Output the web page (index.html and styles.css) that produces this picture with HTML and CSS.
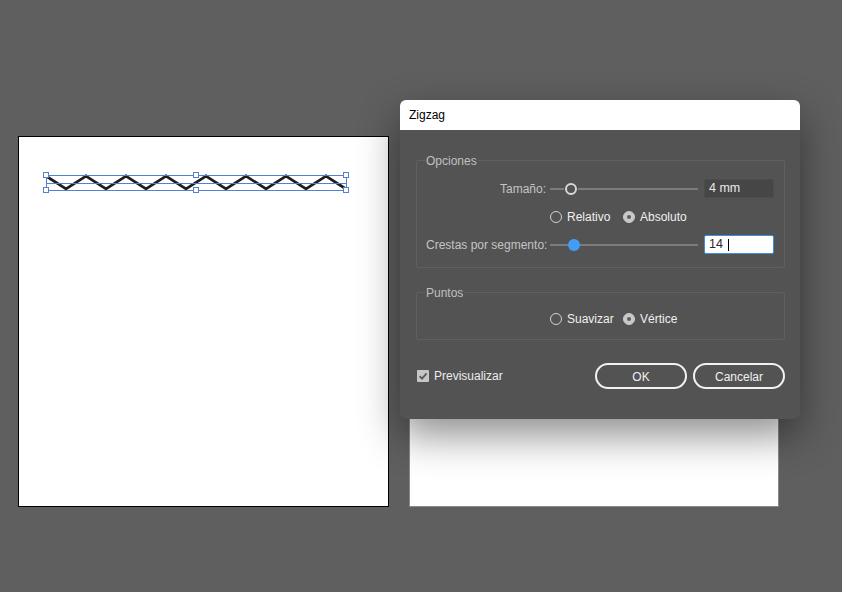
FILE: index.html
```html
<!DOCTYPE html>
<html lang="es">
<head>
<meta charset="utf-8">
<title>Zigzag</title>
<link rel="stylesheet" href="styles.css">
</head>
<body>
<div class="canvas">
  <div class="artboard artboard-left">
    <svg class="art" width="369" height="369" viewBox="0 0 369 369">
      <polyline class="zig" points="27,39 47,52 67,39 87,52 107,39 127,52 147,39 167,52 187,39 207,52 227,39 247,52 267,39 287,52 307,39 327,52"/>
      <rect class="sel" x="27.5" y="38.5" width="300" height="15"/>
      <line class="sel" x1="27.5" y1="46.5" x2="327.5" y2="46.5"/>
      <g class="ticks">
        <rect x="66" y="37" width="2" height="2"/><rect x="106" y="37" width="2" height="2"/>
        <rect x="146" y="37" width="2" height="2"/><rect x="186" y="37" width="2" height="2"/>
        <rect x="226" y="37" width="2" height="2"/><rect x="266" y="37" width="2" height="2"/>
        <rect x="306" y="37" width="2" height="2"/>
      </g>
      <g class="handles">
        <rect x="24.5" y="35.5" width="5" height="5"/>
        <rect x="174.5" y="35.5" width="5" height="5"/>
        <rect x="324.5" y="35.5" width="5" height="5"/>
        <rect x="24.5" y="50.5" width="5" height="5"/>
        <rect x="174.5" y="50.5" width="5" height="5"/>
        <rect x="324.5" y="50.5" width="5" height="5"/>
      </g>
    </svg>
  </div>
  <div class="artboard artboard-right"></div>

  <div class="dialog">
    <div class="titlebar">Zigzag</div>
    <div class="dialog-body">
      <fieldset class="group group-options">
        <legend>Opciones</legend>
        <div class="row">
          <span class="row-label">Tamaño:</span>
          <div class="slider">
            <span class="track"></span>
            <span class="thumb thumb-hollow"></span>
          </div>
          <div class="field field-dark">4 mm</div>
        </div>
        <div class="row row-radios">
          <span class="radio"><span class="dot"></span>Relativo</span>
          <span class="radio checked"><span class="dot"></span>Absoluto</span>
        </div>
        <div class="row">
          <span class="row-label">Crestas por segmento:</span>
          <div class="slider">
            <span class="track"></span>
            <span class="thumb thumb-blue"></span>
          </div>
          <div class="field field-active">14<span class="caret"></span></div>
        </div>
      </fieldset>

      <fieldset class="group group-points">
        <legend>Puntos</legend>
        <div class="row row-radios">
          <span class="radio"><span class="dot"></span>Suavizar</span>
          <span class="radio checked"><span class="dot"></span>Vértice</span>
        </div>
      </fieldset>

      <div class="footer">
        <span class="check">
          <span class="box">
            <svg width="12" height="12" viewBox="0 0 12 12"><path d="M2.6 6.2 L5 8.6 L9.6 3.4" /></svg>
          </span>Previsualizar
        </span>
        <div class="buttons">
          <button class="btn">OK</button>
          <button class="btn">Cancelar</button>
        </div>
      </div>
    </div>
  </div>
</div>
</body>
</html>
```

FILE: styles.css
```css
* { box-sizing: border-box; }

html, body {
  margin: 0;
  padding: 0;
}

body {
  background: #5f5f5f;
  font-family: "Liberation Sans", Arial, sans-serif;
  font-size: 12px;
  width: 842px;
  height: 592px;
  overflow: hidden;
}

.canvas {
  position: relative;
  width: 842px;
  height: 592px;
}

/* artboards on the free canvas */
.artboard {
  position: absolute;
  background: #ffffff;
}

.artboard-left {
  left: 18px;
  top: 136px;
  width: 371px;
  height: 371px;
  border: 1px solid #000;
}

.artboard-right {
  left: 409px;
  top: 136px;
  width: 370px;
  height: 371px;
  border: 1px solid #8a8a8a;
}

.art { display: block; }

.zig {
  fill: none;
  stroke: #1e1e1e;
  stroke-width: 2.7;
  stroke-linejoin: miter;
}

.sel {
  fill: none;
  stroke: #5580d0;
  stroke-width: 1;
}

.ticks rect { fill: #5580d0; }

.handles rect {
  fill: #ffffff;
  stroke: #5580d0;
  stroke-width: 1;
}

/* dialog window */
.dialog {
  position: absolute;
  left: 400px;
  top: 100px;
  width: 400px;
  background: #535353;
  border-radius: 6px;
  box-shadow: 0 16px 40px rgba(0, 0, 0, 0.45);
  overflow: hidden;
}

.titlebar {
  height: 30px;
  line-height: 31px;
  padding-left: 9px;
  background: #ffffff;
  color: #000;
  font-size: 12px;
}

.dialog-body {
  padding: 22px 15px 30px 16px;
  display: flex;
  flex-direction: column;
}

.group {
  margin: 0;
  min-width: 0;
  border: 1px solid #606060;
  border-radius: 2px;
  padding: 6px 10px 9px 9px;
}

.group legend {
  padding: 0 1px;
  margin-left: -1px;
  height: 16px;
  line-height: 18px;
  color: #c0c0c0;
}

.group-points {
  margin-top: 16px;
  padding-top: 4px;
  padding-bottom: 7px;
}

.row {
  height: 28px;
  display: flex;
  align-items: center;
  padding-top: 1px;
}

.row-label {
  width: 120px;
  text-align: right;
  color: #c4c4c4;
  white-space: nowrap;
}

.slider {
  position: relative;
  width: 148px;
  height: 12px;
  margin-left: 4px;
  display: flex;
  align-items: center;
}

.track {
  display: block;
  width: 100%;
  height: 2px;
  background: #7c7c7c;
}

.thumb {
  position: absolute;
  top: 0;
  width: 12px;
  height: 12px;
  border-radius: 50%;
}

.thumb-hollow {
  left: 15px;
  background: #535353;
  border: 2px solid #d8d8d8;
  box-shadow: 0 0 0 1px #535353;
}

.thumb-blue {
  left: 18px;
  background: #439df7;
}

.field {
  margin-left: 6px;
  width: 70px;
  height: 19px;
  line-height: 17px;
  padding-left: 4px;
  font-size: 12.5px;
  border-radius: 2px;
  display: flex;
  align-items: center;
}

.field-dark {
  background: #464646;
  border: 1px solid #4c4c4c;
  color: #e8e8e8;
}

.field-active {
  background: #ffffff;
  border: 1px solid #3d8fe0;
  color: #2a2a2a;
}

.caret {
  display: inline-block;
  width: 1px;
  height: 12px;
  background: #000;
  margin-left: 5px;
}

.row-radios {
  padding-left: 124px;
  display: grid;
  grid-template-columns: 73px auto;
  align-items: center;
  justify-content: start;
}

.radio {
  display: flex;
  align-items: center;
  gap: 5px;
  color: #f0f0f0;
  white-space: nowrap;
}

.dot {
  width: 12px;
  height: 12px;
  border-radius: 50%;
  border: 1px solid #d2d2d2;
  flex: none;
  position: relative;
}

.radio.checked .dot {
  background: #c9c9c9;
  border-color: #c9c9c9;
}

.radio.checked .dot::after {
  content: "";
  position: absolute;
  left: 3px;
  top: 3px;
  width: 4px;
  height: 4px;
  border-radius: 50%;
  background: #5e5e5e;
}

.footer {
  margin-top: 23px;
  height: 26px;
  display: flex;
  align-items: center;
  justify-content: space-between;
}

.check {
  display: flex;
  align-items: center;
  gap: 5px;
  margin-left: 1px;
  color: #ececec;
}

.box {
  width: 12px;
  height: 12px;
  background: #c6c6c6;
  border-radius: 1px;
  display: block;
}

.box svg {
  display: block;
}

.box path {
  fill: none;
  stroke: #5a5a5a;
  stroke-width: 1.8;
}

.buttons {
  display: flex;
  gap: 6px;
}

.btn {
  width: 92px;
  height: 26px;
  border: 2px solid #f2f2f2;
  border-radius: 13px;
  background: transparent;
  color: #f0f0f0;
  font-family: "Liberation Sans", Arial, sans-serif;
  font-size: 12px;
  padding: 1px 0 0;
}
```
